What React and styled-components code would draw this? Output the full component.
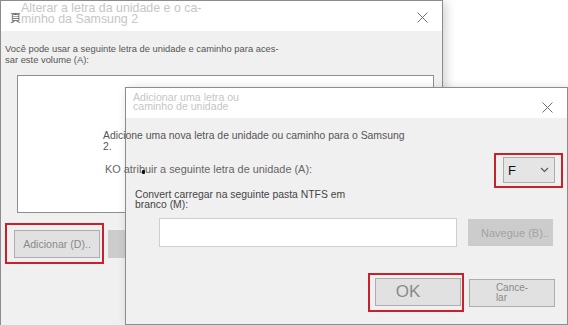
import styled, { createGlobalStyle } from "styled-components"

const Global = createGlobalStyle`
  html, body {
    margin: 0;
    padding: 0;
    background: #fff;
  }
`

const Desktop = styled.div`
  position: relative;
  width: 568px;
  height: 325px;
  overflow: hidden;
  background: #fff;
  font-family: "Liberation Sans", Arial, sans-serif;
`

// windows sit on a free canvas, so they are placed by coordinates
const Window = styled.div`
  position: absolute;
  left: ${p => p.$x}px;
  top: ${p => p.$y}px;
  width: ${p => p.$w}px;
  height: ${p => p.$h}px;
  box-sizing: border-box;
  border: 1px solid #8c8c8c;
  background: #f0f0f0;
  display: flex;
  flex-direction: column;
  box-shadow: 3px 2px 10px rgba(0, 0, 0, 0.18);
`

const TitleBar = styled.div`
  height: 30px;
  flex: none;
  background: #fff;
  display: flex;
  align-items: flex-start;
  padding: ${p => p.$pad};
  box-sizing: border-box;
`

const Title = styled.div`
  flex: 1;
  color: #c6c6c6;
  font-size: ${p => p.$size}px;
  line-height: ${p => p.$lh}px;
`

const AppIcon = styled.span`
  font-family: "Noto Sans CJK SC", sans-serif;
  font-size: 11px;
  line-height: 12px;
  color: #6a6a6a;
  margin: 8px 0 0 0;
`

const Close = styled.svg`
  width: 11px;
  height: 11px;
  flex: none;
  margin: ${p => p.$m};
`

const CloseIcon = ({ m }) => (
  <Close $m={m} viewBox="0 0 11 11">
    <path d="M0.5 0.5 L10.5 10.5 M10.5 0.5 L0.5 10.5" stroke="#707070" strokeWidth="1" fill="none" />
  </Close>
)

const Body = styled.div`
  flex: 1;
  display: flex;
  flex-direction: column;
  padding: ${p => p.$pad};
`

const Text = styled.p`
  margin: ${p => p.$m || 0};
  font-size: ${p => p.$size || 10}px;
  line-height: ${p => p.$lh || 11}px;
  color: ${p => p.$color || "#555"};
  white-space: nowrap;
`

const ListBox = styled.div`
  width: 417px;
  height: 138px;
  box-sizing: border-box;
  margin: 10px 0 0 12px;
  background: #fff;
  border: 1px solid #8f8f8f;
`

const Row = styled.div`
  display: flex;
  align-items: ${p => p.$align || "center"};
  justify-content: ${p => p.$justify || "flex-start"};
  gap: ${p => p.$gap || 0}px;
  margin: ${p => p.$m || 0};
`

const Spacer = styled.div`
  flex: 1;
`

const Highlight = styled.div`
  border: 2px solid #c9212b;
  padding: ${p => p.$pad};
  display: flex;
`

const Button = styled.button`
  width: ${p => p.$w}px;
  height: ${p => p.$h}px;
  box-sizing: border-box;
  font-family: "Liberation Sans", Arial, sans-serif;
  font-size: ${p => p.$size || 12}px;
  line-height: ${p => p.$lh || 12}px;
  color: ${p => (p.$disabled ? "#a3a3a3" : "#8a8a8a")};
  background: ${p => (p.$disabled ? "#cccccc" : "#e1e1e1")};
  border: 1px solid ${p => (p.$disabled ? "#cccccc" : "#adadad")};
  padding: ${p => p.$pad || 0};
  margin: 0;
`

const Stacked = styled.span`
  display: inline-block;
  text-align: left;
`

const Select = styled.div`
  width: 52px;
  height: 26px;
  box-sizing: border-box;
  background: #e5e5e5;
  border: 1px solid #adadad;
  display: flex;
  align-items: center;
  justify-content: space-between;
  padding: 0 5px 0 4px;
  font-size: 13px;
  color: #111;
`

const Input = styled.div`
  width: 298px;
  height: 29px;
  box-sizing: border-box;
  background: #fff;
  border: 1px solid #cfcfcf;
`

const Cursor = styled.span`
  position: absolute;
  left: 142px;
  top: 170px;
  width: 3px;
  height: 4px;
  background: #111;
  border-radius: 1px;
`

export default function App() {
  return (
    <>
      <Global />
      <Desktop>
        <Window $x={0} $y={0} $w={443} $h={360}>
          <TitleBar $pad="2px 10px 0 9px">
            <AppIcon>頁</AppIcon>
            <Title $size={12.4} $lh={11}>
              Alterar a letra da unidade e o ca-
              <br />
              minho da Samsung 2
            </Title>
            <CloseIcon m="9px 4px 0 0" />
          </TitleBar>
          <Body $pad="12px 0 0 4px">
            <Text $size={9.4}>
              Você pode usar a seguinte letra de unidade e caminho para aces-
              <br />
              sar este volume (A):
            </Text>
            <ListBox />
            <Row $gap={4} $m="10px 0 0 0">
              <Highlight $pad="5px 2px 4px 7px">
                <Button $w={86} $h={28} $size={10.6}>Adicionar (D)..</Button>
              </Highlight>
              <Button $w={60} $h={28} $disabled />
            </Row>
          </Body>
        </Window>

        <Window $x={125} $y={87} $w={443} $h={238}>
          <TitleBar $pad="5px 9px 0 7px">
            <Title $size={10.6} $lh={9}>
              Adicionar uma letra ou
              <br />
              caminho de unidade
            </Title>
            <CloseIcon m="9px 5px 0 0" />
          </TitleBar>
          <Body $pad="12px 0 0 0">
            <Text $m="0 0 0 -23px" $size={10.4}>
              Adicione uma nova letra de unidade ou caminho para o Samsung
              <br />
              2.
            </Text>
            <Row $m="1px 4px 0 0">
              <Text $m="0 0 3px -21px" $size={10.9} $lh={13} $color="#666">
                KO atribuir a seguinte letra de unidade (A):
              </Text>
              <Spacer />
              <Highlight $pad="2px 6px 3px 7px">
                <Select>
                  F
                  <svg width="9" height="6" viewBox="0 0 9 6">
                    <path d="M1 1 L4.5 4.5 L8 1" stroke="#555" strokeWidth="1.1" fill="none" />
                  </svg>
                </Select>
              </Highlight>
            </Row>
            <Text $m="2px 0 0 9px" $size={10.4} $lh={10} $color="#444">
              Convert carregar na seguinte pasta NTFS em
              <br />
              branco (M):
            </Text>
            <Row $gap={11} $m="8px 0 0 33px">
              <Input />
              <Button $w={85} $h={27} $size={11} $pad="0 0 0 9px" $disabled>
                Navegue (B)..
              </Button>
            </Row>
            <Row $gap={5} $justify="flex-end" $m="26px 12px 0 0">
              <Highlight $pad="3px 1px 4px 5px">
                <Button $w={86} $h={28} $size={17} $lh={18} $pad="0 20px 0 0">OK</Button>
              </Highlight>
              <Button $w={86} $h={28} $size={10} $lh={10}>
                <Stacked>
                  Cance-
                  <br />
                  lar
                </Stacked>
              </Button>
            </Row>
          </Body>
        </Window>
        <Cursor />
      </Desktop>
    </>
  )
}
